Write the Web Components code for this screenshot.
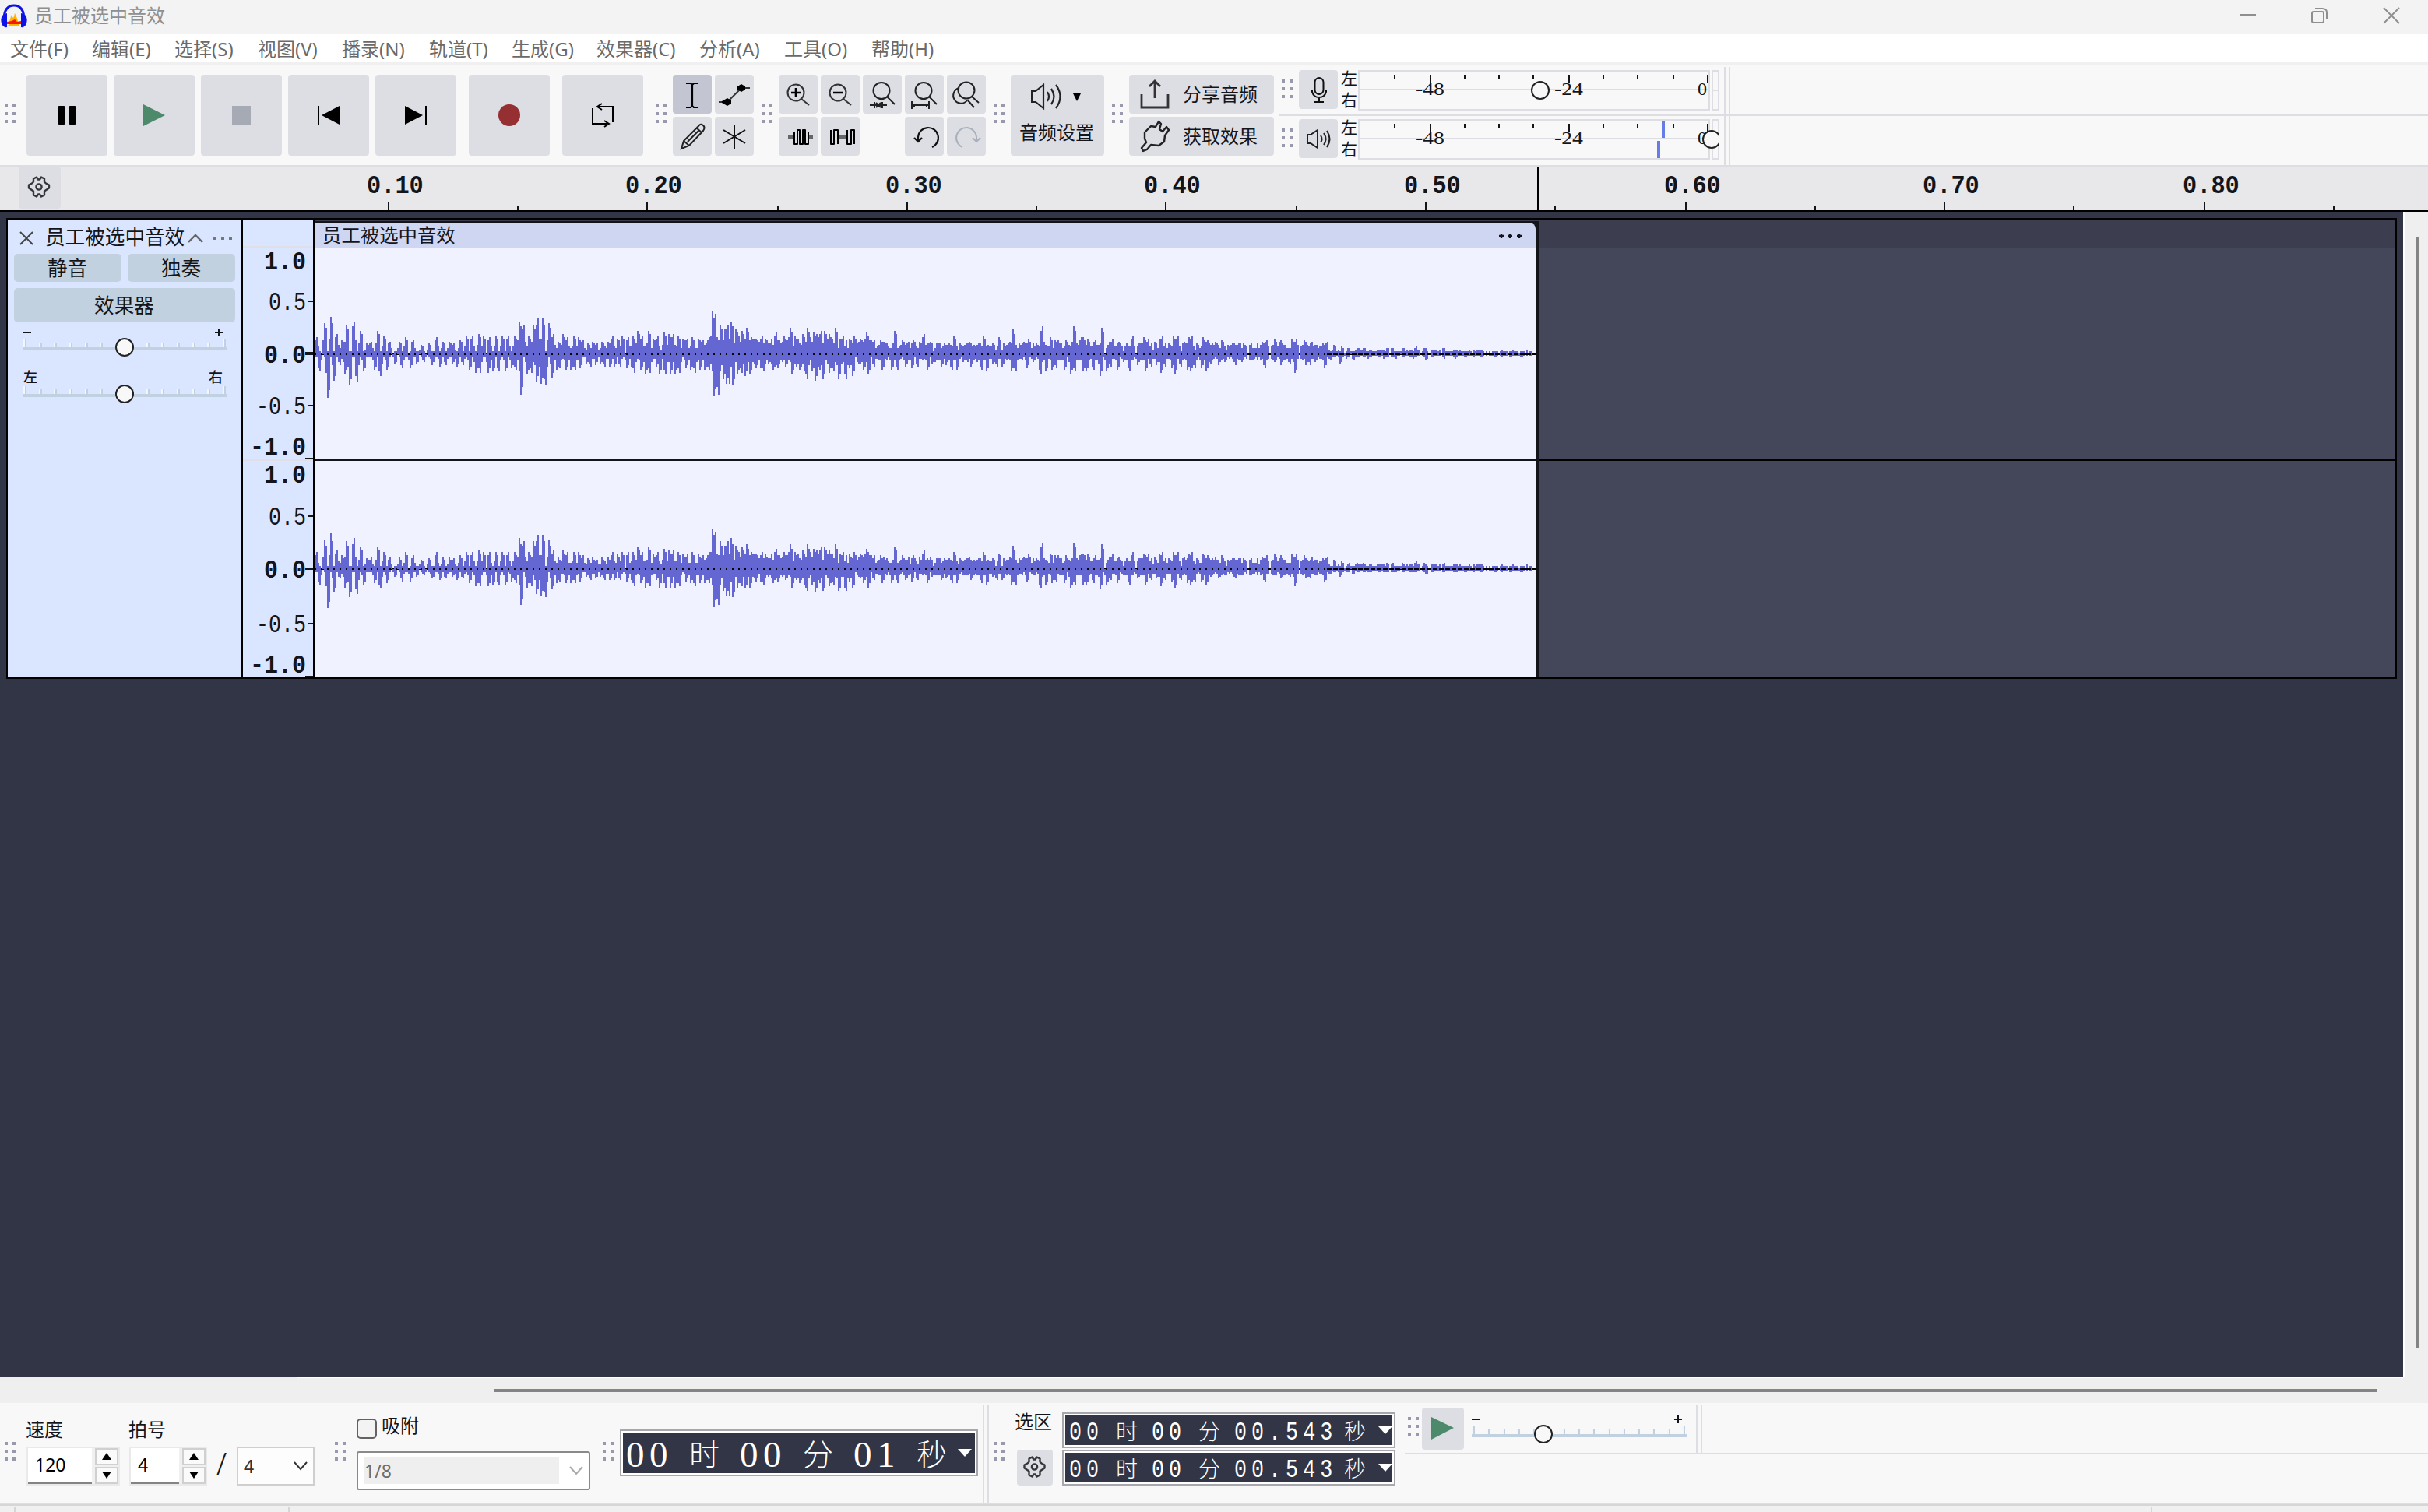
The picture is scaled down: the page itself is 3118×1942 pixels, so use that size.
<!DOCTYPE html>
<html lang="zh-CN">

<head>
    <meta charset="UTF-8">
    <meta name="viewport" content="width=device-width, initial-scale=1.0">
    <title>员工被选中音效</title>
    <style>
        html,
        body {
            margin: 0;
            width: 3118px;
            height: 1942px;
            overflow: hidden;
        }

        body {
            font-family: "Noto Sans", "Noto Sans CJK SC", sans-serif;
            font-size: 24px;
            color: #14151a;
            background: #f0f0f0;
        }
    </style>
</head>

<body>
    <audio-app></audio-app>

    <script>
        // 图标，坐标以按钮左上角为原点
        const icons = {
            pause: [104, 104, '<rect x="40" y="40" width="10" height="24" rx="2"/><rect x="54" y="40" width="10" height="24" rx="2"/>'],
            play: [104, 104, '<path d="M38 38 66 52 38 66z" fill="#4c8a6b"/>'],
            stop: [104, 104, '<rect x="40" y="40" width="24" height="24" fill="#a5aab5"/>'],
            prev: [104, 104, '<path d="M66 40V64L43 52z"/><path d="M39 40V64" stroke="#000" stroke-width="2"/>'],
            next: [104, 104, '<path d="M38 40V64L61 52z"/><path d="M65 40V64" stroke="#000" stroke-width="2"/>'],
            record: [104, 104, '<circle cx="52" cy="52" r="14" fill="#962f31"/>'],
            loop: [104, 104, '<g fill="none" stroke="#000" stroke-width="2"><path d="M39 43V63H57M65 61V41H46"/><path d="M51 37 45 41 51 45M54 59 60 63 54 67"/></g>'],
            gear: [54, 54, '<g transform="translate(-1 -.5)" fill="none" stroke="#35363b" stroke-width="2.4" stroke-linejoin="round"><path d="M24 14 26 17H28L30 14 34 16 34 20 36 22 40 24V28L37 30 34 32 34 37 30 39 28 36H26L24 39 20 37 20 32 17 30 14 28V24L18 22 20 20V16z"/><circle cx="27" cy="26.5" r="3.6"/></g>'],
            gearsmall: [46, 46, '<g transform="translate(-4.500 -4.500)" fill="none" stroke="#35363b" stroke-width="2.4" stroke-linejoin="round"><path d="M24 14 26 17H28L30 14 34 16 34 20 36 22 40 24V28L37 30 34 32 34 37 30 39 28 36H26L24 39 20 37 20 32 17 30 14 28V24L18 22 20 20V16z"/><circle cx="27" cy="26.5" r="3.6"/></g>'],
            ibeam: [50, 50, '<path d="M17 11H23L25 13 27 11H33M25 12V41M17 42H23L25 40 27 42H33" fill="none" stroke="#000" stroke-width="2.2"/>'],
            envelope: [50, 50, '<path d="M16 35 34 17M5 35H16M34 17H45" stroke="#333" stroke-width="2"/><path d="M34 12 39 15V19L34 22 29 19V15zM16 30 21 33V37L16 40 9 36V34z"/>'],
            pencil: [50, 50, '<path d="M11 41 14 31 33 12Q36 8 39 11 42 14 39 18L21 37zM14 31 21 37M30 14 37 20M19 32 34 17" fill="none" stroke="#222" stroke-width="2"/>'],
            multi: [50, 50, '<path d="M25 10V41M11 17 39 34M39 17 11 34" stroke="#111" stroke-width="2"/>'],
            zoomin: [50, 50, '<g fill="none" stroke="#333" stroke-width="2"><circle cx="22" cy="23" r="10.5"/><path d="M29 31 39 39"/><path d="M22 17V29M16 23H28" stroke-width="2.6" stroke="#000"/></g>'],
            zoomout: [50, 50, '<g fill="none" stroke="#333" stroke-width="2"><circle cx="22" cy="23" r="10.5"/><path d="M29 31 39 39"/><path d="M16 23H28" stroke-width="2.6" stroke="#000"/></g>'],
            zoomsel: [50, 50, '<g fill="none" stroke="#222" stroke-width="2"><circle cx="24" cy="20.5" r="10.5"/><path d="M31 28 41 38M9 39H31M15 35V43M25 35V43M17 36 20 39 17 42M23 36 20 39 23 42" /></g>'],
            zoomfit: [50, 50, '<g fill="none" stroke="#222" stroke-width="2"><circle cx="24" cy="20.5" r="10.5"/><path d="M31 28 41 38M9 34V44M31 34V44M9 39H31M12 37V41M28 37V41"/></g>'],
            zoomtoggle: [50, 50, '<g fill="none" stroke="#222" stroke-width="2"><circle cx="25" cy="20" r="10.5"/><path d="M16 17A10 10 0 1 0 26 33M32 28 41 36M27 33 35 42"/></g>'],
            trim: [50, 50, '<path d="M12 26H20M38 26H44" stroke="#666" stroke-width="4"/><path d="M20 19V35H24V17H27V35H31V17H34V35H38V19" fill="none" stroke="#000" stroke-width="2" stroke-linejoin="round"/>'],
            silence: [50, 50, '<path d="M22 26H34" stroke="#666" stroke-width="4"/><path d="M13 17V35H17V17H22V35M34 17V35H39V17H43V35" fill="none" stroke="#000" stroke-width="2" stroke-linejoin="round"/>'],
            undo: [50, 50, '<path d="M17 31V26A13 13 0 1 1 35 39M12 27 17 32 22 27" fill="none" stroke="#111" stroke-width="2.2"/>'],
            redo: [50, 50, '<path d="M38 31V26A13 13 0 1 0 20 39M33 27 38 32 43 27" fill="none" stroke="#aab0bb" stroke-width="2"/>'],
            mic: [50, 50, '<g fill="none" stroke="#111" stroke-width="2"><rect x="20.500" y="10" width="11" height="21" rx="5.500"/><path d="M17 25V28Q19 35 26 35 33 35 35 28V25M26 35V40M20 41H32"/></g>'],
            volume: [50, 50, '<g fill="none" stroke="#222" stroke-width="2"><path d="M11 20H15L24 14V37L15 31H11z"/><path d="M28 21Q31 25.500 28 30M32 18Q37 25.500 32 33M36 15Q43 25.500 36 36"/></g>'],
            speaker: [66, 36, '<g fill="none" stroke="#222" stroke-width="2.2"><path d="M1 11H6L16 3V33L6 25H1z"/><path d="M21 12Q25 18 21 24M26 8Q33 18 26 28M32 3Q43 18 32 33"/></g><path d="M54 14H64L59 24z"/>'],
            share: [38, 38, '<path d="M2 19V36H36V19M19 24V3M12 9 19 2 26 9" fill="none" stroke="#333" stroke-width="2.8"/>'],
            plug: [38, 42, '<path d="M6 16 14 8 20 9 24 2 27 5 25 12 29 15 34 9 37 13 32 20 31 28 24 33 14 32 9 38 4 40 2 36 8 29 6 24z" fill="none" stroke="#222" stroke-width="2.400" stroke-linejoin="round"/>'],
            playsmall: [54, 54, '<path d="M12 12 41 26 12 41z" fill="#4c8a6b"/>'],
            close: [18, 18, '<path d="M1 1 17 17M17 1 1 17" stroke="#444" stroke-width="2"/>'],
            up: [20, 12, '<path d="M1 11 10 2 19 11" fill="none" stroke="#666" stroke-width="2.400"/>'],
            dots: [26, 6, '<path d="M1 1h4v4h-4zM11 1h4v4h-4zM21 1h4v4h-4z" fill="#777"/>'],
            clipdots: [30, 8, '<path d="M1 4h6M4 1v6M12 4h6M15 1v6M24 4h6M27 1v6" stroke="#14151a" stroke-width="2.400"/>'],
            down: [18, 12, '<path d="M1 1 9 10 17 1" fill="none" stroke="currentColor" stroke-width="2"/>'],
            logo: [36, 44, '<g transform="translate(1 0)"><path d="M9 31C11 26 12 20 14 16Q16 24 18 14 21 19 24 31z" fill="#ffb400"/><path d="M8 25 14 24 18 22 21 25 26 24V28H8z" fill="#f31a00"/><path d="M4 23Q4 4 17 4T30 23" fill="none" stroke="#0d12e8" stroke-width="3"/><path d="M8 14Q-2 16 1 27 3 33 8 32zM26 14Q36 16 33 27 31 33 26 32z" fill="#0d12e8"/></g>'],
            min: [22, 22, '<path d="M1 10H21" stroke="#8f8f8f" stroke-width="2"/>'],
            restore: [22, 22, '<g fill="none" stroke="#8f8f8f" stroke-width="2"><rect x="1" y="6" width="15" height="14" rx="2"/><path d="M5 2H14Q20 2 20 7V16"/></g>'],
            quit: [22, 22, '<path d="M1 1 21 21M21 1 1 21" stroke="#8f8f8f" stroke-width="2"/>']
        }

        class Base extends HTMLElement {
            constructor() {
                super()
                this.attachShadow({ mode: 'open' })
            }
            connectedCallback() {
                this.shadowRoot.innerHTML = `<style>
                    * { box-sizing: border-box; }
                    :host { display: block; box-sizing: border-box; flex: none; }
                    ${this.css()}
                </style>${this.html()}`
            }
            css() { return '' }
            html() { return '<slot></slot>' }
            get(name, def) { return this.getAttribute(name) || def }
        }

        class AppIcon extends Base {
            css() { return 'svg { display: block; }' }
            html() {
                const [w, h, d] = icons[this.get('name')]
                return `<svg width="${w}" height="${h}" viewBox="0 0 ${w} ${h}">${d}</svg>`
            }
        }

        class IconButton extends Base {
            css() {
                return `
                    :host {
                        width: ${this.get('w', 50)}px;
                        height: ${this.get('h', 50)}px;
                        border-radius: 4px;
                        background: #dddee4;
                        overflow: hidden;
                    }
                    :host([active]) { background: #c3c5d3; }`
            }
            html() { return `<app-icon name="${this.get('icon')}"></app-icon>` }
        }

        // 工具栏左侧的拖动手柄
        class ToolGrip extends Base {
            css() {
                return `
                    :host {
                        display: grid;
                        grid-template-columns: 4px 4px;
                        grid-auto-rows: 4px;
                        gap: 6px;
                        width: 14px;
                    }
                    i { background: #9899ad; }`
            }
            html() { return '<i></i>'.repeat(6) }
        }

        class TitleBar extends Base {
            css() {
                return `
                    :host { display: flex; height: 44px; background: #f3f3f3; color: #8f8f8f; padding-right: 36px; }
                    .name { margin-left: 8px; line-height: 40px; flex: 1; }
                    .logo { padding-top: 3px; }
                    .win { display: flex; gap: 70px; padding-top: 9px; }
                `
            }
            html() {
                return `<div class="logo"><app-icon name="logo"></app-icon></div>
                    <div class="name"><slot></slot></div>
                    <div class="win"><app-icon name="min"></app-icon><app-icon name="restore"></app-icon><app-icon name="quit"></app-icon></div>`
            }
        }

        class MenuBar extends Base {
            css() {
                return `
                    :host { display: flex; height: 40px; background: #fff; border-bottom: 4px solid #f0f0f0; padding-left: 13px; color: #6a6a6a; }
                    span { line-height: 38px; white-space: nowrap; }`
            }
            html() {
                const items = [['文件(F)', 105], ['编辑(E)', 106], ['选择(S)', 107], ['视图(V)', 108], ['播录(N)', 112], ['轨道(T)', 106], ['生成(G)', 109], ['效果器(C)', 132], ['分析(A)', 109], ['工具(O)', 112], ['帮助(H)', 90]]
                return items.map(([t, w]) => `<span style="width:${w}px">${t}</span>`).join('')
            }
        }

        class LevelMeter extends Base {
            css() {
                return `
                    :host { display: flex; height: 52px; }
                    .lr { width: 26px; padding-left: 4px; font-size: 21px; line-height: 28px; margin-top: -4px; }
                    .lr div { height: 28px; }
                    svg { display: block; font: 24px "Liberation Serif", serif; }`
            }
            html() {
                const ticks = [47, 93, 137, 181, 225, 271, 315, 359, 405, 449]
                    .map((x, i) => `<rect x="${x - 1}" y="6" width="2" height="${[1, 5, 9].includes(i) ? 10 : 6}"/>`).join('')
                const play = this.get('icon') === 'volume'
                return `<icon-button icon="${this.get('icon')}"></icon-button>
                    <div class="lr"><div>左</div><div>右</div></div>
                    <svg width="464" height="52" fill="#14151a">
                        <g fill="none" stroke="#dddee3" stroke-width="2"><rect x="1" y="1" width="450" height="50"/><rect x="455" y="1" width="8" height="50"/><path d="M0 25H452M454 26H464"/></g>
                        ${ticks}
                        <text x="74" y="32" textLength="37" lengthAdjust="spacingAndGlyphs">-48</text><text x="252" y="32" textLength="37" lengthAdjust="spacingAndGlyphs">-24</text><text x="436" y="32">0</text>
                        ${play ? '<path d="M390 2h4v22h-4zM384 28h4v22h-4z" fill="#667ce6"/>' : ''}
                        <circle cx="${play ? 454 : 234}" cy="26" r="11" fill="#f8f8f8" stroke="#222" stroke-width="2"/>
                    </svg>`
            }
        }

        class WideButton extends Base {
            css() {
                return `
                    :host { display: flex; align-items: center; width: 186px; height: 50px; border-radius: 4px; background: #dddee4; padding-left: 14px; }
                    .t { margin-left: 17px; line-height: 46px; }
                    .i { width: 38px; }`
            }
            html() { return `<div class="i"><app-icon name="${this.get('icon')}"></app-icon></div><div class="t"><slot></slot></div>` }
        }

        class TopTools extends Base {
            css() {
                return `
                    :host { display: flex; height: 130px; background: #f8f8f8; border-bottom: 2px solid #dddee3; padding-left: 6px; }
                    .grip { padding-top: 50px; width: 28px; }
                    .row { display: flex; gap: 8px; padding-top: 12px; }
                    .rec { margin-left: 8px; }
                    .cells { display: grid; gap: 4px; padding-top: 12px; grid-auto-rows: 50px; margin-right: 10px; align-content: start; }
                    .setup { margin-top: 12px; width: 120px; height: 104px; border-radius: 4px; background: #dddee4; padding: 10px 0 0 11px; margin-right: 10px; }
                    .setup app-icon { margin-left: 15px; }
                    .setup div { line-height: 44px; margin-top: 6px; }
                    .share { display: flex; flex-direction: column; gap: 4px; padding-top: 12px; }
                    .meters { flex: 1; margin-left: 6px; display: flex; flex-direction: column; }
                    .meter { display: flex; padding-left: 4px; height: 64px; padding-top: 6px; }
                    .meter:first-child { height: 66px; border-bottom: 2px solid #dddee3; }
                    .meter:last-child { padding-top: 4px; }
                    .meter tool-grip { margin: 12px 8px 0 0; }
                    .end { width: 8px; margin: -4px 0 -10px 6px; border: solid #dddee3; border-width: 0 2px; }
                `
            }
            html() {
                const btn = (n, a = '') => `<icon-button icon="${n}" ${a}></icon-button>`
                const big = (n, c = '') => `<icon-button icon="${n}" w="104" h="104" class="${c}"></icon-button>`
                const grip = '<div class="grip"><tool-grip></tool-grip></div>'
                return `${grip}
                    <div class="row" style="margin-right:16px">${['pause', 'play', 'stop', 'prev', 'next'].map(n => big(n)).join('')}${big('record', 'rec')}${big('loop', 'rec')}</div>
                    <div class="grip" style="width:22px"><tool-grip></tool-grip></div>
                    <div class="cells" style="grid-template-columns:50px 50px">${btn('ibeam', 'active')}${btn('envelope')}${btn('pencil')}${btn('multi')}</div>
                    <div class="grip" style="width:22px"><tool-grip></tool-grip></div>
                    <div class="cells" style="grid-template-columns:repeat(5,50px)">${['zoomin', 'zoomout', 'zoomsel', 'zoomfit', 'zoomtoggle', 'trim', 'silence'].map(n => btn(n)).join('')}<span></span>${btn('undo')}${btn('redo')}</div>
                    <div class="grip" style="width:22px"><tool-grip></tool-grip></div>
                    <div class="setup"><app-icon name="speaker"></app-icon><div>音频设置</div></div>
                    <div class="grip" style="width:22px"><tool-grip></tool-grip></div>
                    <div class="share"><wide-button icon="share">分享音频</wide-button><wide-button icon="plug">获取效果</wide-button></div>
                    <div class="meters">
                        <div class="meter"><tool-grip></tool-grip><level-meter icon="mic"></level-meter><div class="end"></div></div>
                        <div class="meter"><tool-grip></tool-grip><level-meter icon="volume"></level-meter><div class="end"></div></div>
                    </div>`
            }
        }

        class TimeRuler extends Base {
            css() {
                return `
                    :host { display: flex; height: 58px; background: #e8e8ea; border-bottom: 2px solid #000; padding-left: 24px; }
                    svg { display: block; font: bold 33px "Liberation Mono", monospace; }`
            }
            html() {
                let s = ''
                for (let i = 0; i < 16; i++) {
                    const x = Math.floor((498.5 + i * 166.55) / 2) * 2 - 78
                    s += `<rect x="${x}" y="${i % 2 ? 50 : 46}" width="2" height="10"/>`
                    if (i % 2 === 0) s += `<text transform="translate(${x - 27} 34) scale(.92 1)">${((i / 2 + 1) / 10).toFixed(2)}</text>`
                }
                return `<icon-button icon="gear" w="54" h="54"></icon-button>
                    <svg width="3040" height="56" fill="#14151a">${s}<rect x="1896" width="2" height="56" fill="#000"/></svg>`
            }
        }

        // 音量 / 声像滑块
        class MiniSlider extends Base {
            css() {
                return `
                    .cap { display: flex; justify-content: space-between; width: 256px; height: 18px; font-size: 18px; line-height: 18px; font-weight: 500; }
                    svg { display: block; overflow: visible; }`
            }
            html() {
                const w = +this.get('width', 262), n = +this.get('ticks', 14), pos = +this.get('pos', 130)
                const step = (w - 6) / (n - 1)
                let t = ''
                for (let i = 0; i < n; i++) {
                    const x = Math.round(i * step), h = i % (n - 1) ? 6 : 10
                    t += `<rect x="${x}" y="${14 - h}" width="2" height="${h}" fill="#f4f7fa"/><rect x="${x + 2}" y="${14 - h}" width="2" height="${h}" fill="#c2d1e0"/>`
                }
                const cap = this.hasAttribute('left')
                    ? `<div class="cap"><span>${this.get('left')}</span><span>${this.get('right')}</span></div>`
                    : `<svg width="${w}" height="18"><path d="M0 13H10M${w - 16} 13H${w - 6}M${w - 11} 8V18" stroke="#14151a" stroke-width="2"/></svg>`
                return `${cap}<svg width="${w}" height="26">${t}<rect y="14" width="${w}" height="4" fill="#c2d1e0"/>
                    <circle cx="${pos}" cy="14" r="11" fill="#f8f8f8" stroke="#222" stroke-width="2"/></svg>`
            }
        }

        class TrackPanel extends Base {
            css() {
                return `
                    :host { width: 302px; background: #dae6ff; border-right: 2px solid #000; padding: 0 8px; font-family: "Noto Sans CJK SC", sans-serif; font-size: 25.600px; }
                    .head { display: flex; align-items: center; height: 44px; padding-left: 7px; }
                    .head app-icon { margin-top: 3px; }
                    .name { width: 183px; margin: -3px 0 0 15px; white-space: nowrap; }
                    .head app-icon:last-child { margin-left: 12px; }
                    .btns { display: grid; grid-template-columns: 138px 138px; gap: 8px; }
                    .btns div { background: #c2d1e0; border-radius: 5px; height: 36px; line-height: 34px; text-align: center; padding-right: 1px; }
                    .btns .fx { grid-column: span 2; height: 44px; line-height: 41px; }
                    mini-slider { margin: 0 0 0 12px; }
                    mini-slider + mini-slider { margin-top: 16px; }`
            }
            html() {
                return `<div class="head"><app-icon name="close"></app-icon><div class="name"><slot></slot></div><app-icon name="up"></app-icon><app-icon name="dots"></app-icon></div>
                    <div class="btns"><div>静音</div><div>独奏</div><div class="fx">效果器</div></div>
                    <mini-slider></mini-slider><mini-slider left="左" right="右"></mini-slider>`
            }
        }

        class AmpScale extends Base {
            css() {
                return `
                    :host { width: 92px; background: #dae6ff; border-right: 2px solid #000; }
                    svg { display: block; overflow: visible; font: 33px "Liberation Mono", monospace; }
                    .b { font-weight: bold; }`
            }
            html() {
                // [文字, 基线, 刻度]
                const rows = [['1.0', 64, 0], ['0.5', 116, 104], ['0.0', 184, 170], ['-0.5', 250, 238], ['-1.0', 302, 306],
                ['1.0', 338, 0], ['0.5', 392, 380], ['0.0', 460, 448], ['-0.5', 530, 518], ['-1.0', 582, 586]]
                const s = rows.map(([t, y, k]) => {
                    const bold = !t.includes('5')
                    const w = t.length * (bold ? 18 : 16)
                    return `<text transform="translate(${81 - w} ${y}) scale(${bold ? 0.91 : 0.81} 1)" class="${bold ? 'b' : ''}">${t}</text>`
                        + (k ? `<rect x="${bold ? 80 : 84}" y="${k}" width="${bold ? 10 : 6}" height="${k === 170 ? 4 : 2}"/>` : '')
                }).join('')
                return `<svg width="90" height="588" fill="#14151a"><path d="M0 35H90M0 309H90" stroke="#e0dfe8" stroke-width="2"/>${s}</svg>`
            }
        }

        // 波形峰值：x:y，每段有自己的起点与横向比例
        const segments = [{
            start: -4, rate: 1.96, mid: 225,
            up: '11:156 30:102 47:78 61:144 74:168 88:108 104:96 122:132 139:180 147:174 163:132 180:150 197:174 218:174 236:156 255:168 273:186 293:180 312:156 328:174 344:174 358:180 373:168 387:150 403:150 418:144 433:150 448:156 463:150 478:150 493:150 508:150 521:96 532:108 544:150 557:108 570:84 582:84 594:102 607:144 618:174 631:144 644:156 657:150 669:156 681:168 694:180 707:174 719:184 731:174 745:174 758:150 770:162 782:150 794:156 806:150 820:132 832:150 845:132 858:162 870:150 884:138 896:144 908:144 921:150 934:162 946:162 958:156 971:162 984:168 998:156 1009:54 1017:66 1028:108 1037:126 1046:108 1056:96 1066:126 1074:150 1083:132 1092:120 1104:156 1111:162 1122:168 1131:150 1141:162 1153:180 1167:138 1178:180 1186:150 1198:156 1205:120 1216:150 1224:162 1233:144 1245:120 1254:156 1263:138 1272:144 1280:132 1291:132 1300:144 1311:162 1319:120 1330:168 1338:150 1352:162 1366:150 1377:174 1394:138 1409:168 1420:198 1430:168 1440:174 1452:192 1467:132 1485:168 1502:174 1515:168 1528:174 1542:144 1555:174',
            down: '21:288 38:390 54:324 69:264 81:300 96:342 115:330 130:288 155:282 171:306 188:282 208:258 227:276 246:276 264:258 284:252 303:264 320:270 336:264 351:258 366:270 380:264 395:282 410:294 425:294 441:294 456:288 470:288 486:288 501:276 514:282 527:378 540:300 551:294 563:330 576:336 589:342 602:312 615:282 625:276 638:282 650:282 663:282 675:276 688:258 700:270 714:264 724:258 735:270 750:270 762:270 777:270 790:276 802:270 813:294 827:282 840:300 852:294 865:270 876:300 889:300 902:300 914:300 927:294 940:276 953:282 966:294 978:282 989:282 1001:282 1012:384 1019:330 1025:378 1034:318 1041:336 1052:336 1060:342 1072:300 1080:294 1088:306 1100:300 1107:276 1117:276 1127:276 1135:288 1148:258 1161:282 1174:276 1193:270 1209:300 1219:270 1228:282 1238:288 1248:318 1258:288 1268:324 1276:282 1287:318 1303:294 1312:288 1323:318 1332:258 1343:318 1354:276 1362:306 1375:258 1388:282 1399:300 1415:270 1436:282 1460:282 1473:282 1492:270 1510:276 1523:270 1547:282 1560:258'
        }, {
            start: 776, rate: 1.912, mid: 554,
            up: '25:504 45:518 60:510 72:516 86:480 98:510 110:516 122:504 133:516 147:510 158:480 170:516 183:516 195:486 207:516 220:504 231:456 245:510 257:504 268:492 285:510 303:444 322:486 331:498 342:498 359:498 377:444 396:486 403:486 414:492 432:498 448:450 465:504 476:492 488:504 506:522 522:480 540:510 549:486 562:492 577:504 587:492 597:480 613:510 622:480 633:480 650:504 660:486 670:480 682:510 697:486 708:498 716:516 725:504 735:516 743:498 757:516 768:510 780:516 797:510 815:510 830:528 843:504 854:498 870:492 880:522 889:498 903:528 915:492 927:492 944:498 954:516 963:504 976:522 990:510 1000:504 1017:516 1036:522 1054:528 1073:528 1090:528 1110:534 1128:534 1146:528 1163:528 1184:528 1205:534 1218:522 1238:528 1260:534 1290:528 1310:534 1340:540 1380:534 1410:540 1450:540 1480:540',
            down: '40:582 52:600 65:594 79:612 92:612 106:582 117:582 128:600 140:582 153:612 165:618 180:588 190:600 201:600 225:618 237:618 263:606 280:582 298:630 311:618 326:612 337:606 355:612 372:630 383:618 400:618 409:618 427:612 445:636 457:618 472:600 484:612 500:582 518:618 537:594 555:618 568:600 580:594 591:624 603:600 620:606 628:630 641:600 656:612 667:618 675:606 692:606 702:618 715:588 733:594 750:582 775:594 790:582 820:576 848:606 870:582 886:594 911:588 922:624 948:594 958:594 970:582 995:606 1010:576 1032:588 1047:570 1067:576 1103:570 1140:570 1172:570 1213:570 1241:576 1287:570 1314:570 1360:564 1430:564'
        }]

        class WaveChannel extends Base {
            css() { return 'svg { display: block; }' }
            html() {
                const h = +this.get('h'), mid = +this.get('mid'), gain = +this.get('gain', 1)
                let d = ''
                const bar = (x, y0, y1) => {
                    const a = Math.round(Math.min(y0, y1) / 2) * 2, b = Math.round(Math.max(y0, y1) / 2) * 2
                    d += `M${x} ${mid + a}h2V${mid + b}h-2z`
                }
                segments.forEach(s => {
                    ['up', 'down'].forEach(dir => {
                        s[dir].split(' ').forEach((p, i) => {
                            const [px, py] = p.split(':').map(Number)
                            const x = Math.round((s.start + px / s.rate) / 2) * 2
                            const v = (py - s.mid) / 3 * gain
                            const inner = dir === 'up' ? 4 : -4
                            bar(x, v, inner)
                            bar(i % 3 ? x + 2 : x - 2, v * 0.82, inner)
                            bar(i % 3 ? x - 2 : x + 2, v * 0.42, 0)
                        })
                    })
                })
                // 密集部分的中心填充
                for (let x = 262; x < 1566; x += 2) {
                    const r = Math.abs(Math.sin(x * 12.9898) * 43758.5453) % 1
                    const t = x < 500 ? 7 : x < 720 ? 14 : x < 1300 ? 10 : 4
                    if (r > 0.2) bar(x, -t * (0.5 + r), x < 1300 ? t * (0.3 + r * 0.6) : 1)
                }
                return `<svg width="1568" height="${h}" shape-rendering="crispEdges"><rect width="1568" height="${h}" fill="#f0f2ff"/>
                    <path d="M0 ${mid}H1568" stroke="#000" stroke-width="2"/><path d="${d}" fill="#6466d2"/>
                    <path d="M0 ${mid}H1568" stroke="#000" stroke-width="2" stroke-dasharray="2 6"/>
                    <path d="M1300 ${mid}H1568" stroke="#000" stroke-width="2" stroke-dasharray="4 4"/></svg>`
            }
        }

        class AudioClip extends Base {
            css() {
                return `
                    :host { width: 1572px; background: #14151a; border-top: 2px solid #3d3d50; padding-top: 2px; border-right: 0; }
                    .head { display: flex; align-items: center; justify-content: space-between; width: 1568px; height: 32px; background: #ced6f2; padding: 0 18px 0 10px;
                        border-top-right-radius: 8px; font: 24.400px/30px "Noto Sans CJK SC", sans-serif; }
                    .head span { margin-top: -3px; }
                    .head app-icon { margin-top: 2px; }
                    wave-channel + wave-channel { margin-top: 2px; }`
            }
            html() {
                return `<div class="head"><span><slot></slot></span><app-icon name="clipdots"></app-icon></div>
                    <wave-channel h="272" mid="137"></wave-channel><wave-channel h="278" mid="139" gain="0.92"></wave-channel>`
            }
        }

        class TrackArea extends Base {
            css() {
                return `
                    :host { display: flex; height: 1496px; background: #313545; }
                    .view { width: 3086px; padding: 8px; }
                    .track { display: flex; width: 3070px; height: 592px; border: 2px solid #000; }
                    .rest { flex: 1; display: flex; flex-direction: column; }
                    .rest i { height: 36px; background: #3d3d50; }
                    .rest b { height: 272px; background: #44465a; border-bottom: 0; }
                    .rest b + b { flex: 1; border-top: 2px solid #000; }
                    .bar { flex: 1; background: #efefef; border-left: 2px solid #fff; padding: 32px 0 0 14px; }
                    .bar div { width: 4px; height: 1428px; background: #848484; }`
            }
            html() {
                return `<div class="view"><div class="track">
                        <track-panel>员工被选中音效</track-panel><amp-scale></amp-scale><audio-clip>员工被选中音效</audio-clip>
                        <div class="rest"><i></i><b></b><b></b></div>
                    </div></div>
                    <div class="bar"><div></div></div>`
            }
        }

        class HScroll extends Base {
            css() {
                return `
                    :host { height: 34px; background: #efefef; }
                    .line { margin-left: 382px; width: 2704px; height: 2px; background: #fff; }
                    .thumb { margin: 14px 0 0 634px; width: 2418px; height: 4px; background: #848484; }`
            }
            html() { return '<div class="line"></div><div class="thumb"></div>' }
        }

        class SpinBox extends Base {
            css() {
                return `
                    :host { display: flex; height: 50px; border: 2px solid #eaeaea; width: ${this.get('w')}px; font-size: 23px; }
                    .v { flex: 1; background: #fff; border-bottom: 2px solid #848484; padding-left: 9px; line-height: 42px; color: #000; }
                    .s { width: 34px; display: flex; flex-direction: column; gap: 2px; padding-left: 4px; background: #f0f0f0; }
                    .s i { flex: 1; border: 2px solid #d0d0d0; background: #fafafa; display: flex; align-items: center; justify-content: center; }
                    svg { display: block; }`
            }
            html() {
                return `<div class="v"><slot></slot></div><div class="s">
                    <i><svg width="12" height="10"><path d="M6 0 12 9H0z"/></svg></i><i><svg width="12" height="10"><path d="M6 9 12 0H0z"/></svg></i></div>`
            }
        }

        class TimeField extends Base {
            css() {
                const big = this.hasAttribute('big')
                return `
                    :host { width: ${big ? 460 : 428}px; height: ${big ? 60 : 46}px; border: 2px solid #a7a8ae; padding: 2px; background: #fff; }
                    .in { display: flex; align-items: center; height: 100%; background: #313545; color: #fff; padding-left: ${big ? 4 : 5}px; line-height: 1; }
                    .n { width: ${big ? 60 : 44}px; white-space: nowrap; }
                    .n.long { width: 120px; }
                    .n span { display: inline-block; transform-origin: 0 50%; font: ${big ? '47px/1 "Liberation Serif", serif' : '33px/1 "Liberation Mono", monospace'};
                        letter-spacing: ${big ? 6.5 : 7.4}px; transform: scaleX(${big ? 1 : 0.81}); margin-top: ${big ? 4 : 7}px; }
                    .u { width: ${big ? 86 : 62}px; text-align: center; font: ${big ? '300 39px' : '300 28px'}/1 "Noto Sans CJK SC", sans-serif; margin-top: -1px; padding-right: ${big ? 5 : 2}px; }
                    .u.last { width: ${big ? 78 : 64}px; padding: 0 0 0 ${big ? 3 : 6}px; }
                    svg { display: block; margin-left: ${big ? -4 : 1}px; }`
            }
            html() {
                const parts = this.get('value').split(' ')
                return `<div class="in">${parts.map((p, i) => i % 2 ? `<div class="u ${i === 5 ? 'last' : ''}">${p}</div>` : `<div class="n ${p.length > 2 ? 'long' : ''}"><span>${p}</span></div>`).join('')}
                    <svg width="18" height="10"><path d="M0 0H18L9 10z" fill="#fff"/></svg></div>`
            }
        }

        class BottomTools extends Base {
            css() {
                return `
                    :host { display: flex; height: 132px; background: #f8f8f8; border-bottom: 2px solid #d6d6d8; box-shadow: inset 0 -2px #dddee3; padding-left: 6px; }
                    .grip { padding-top: 50px; width: 28px; }
                    .col { padding-top: 18px; }
                    .lab { height: 38px; line-height: 30px; font-family: "Noto Sans CJK SC", sans-serif; white-space: nowrap; margin-left: -1px; }
                    .slash { font-size: 38px; line-height: 42px; font-weight: 300; }
                    .row { display: flex; }
                    .sel { display: flex; align-items: center; justify-content: space-between; width: 100px; height: 50px; border: 2px solid #cfcfcf; padding: 0 7px; font-size: 23px; color: #333; background: #fdfdfd; line-height: 44px; }
                    .snap { padding-top: 14px; width: 316px; }
                    .check { display: flex; height: 40px; }
                    .check .lab { margin-top: -1px; }
                    .box { width: 26px; height: 26px; border: 2px solid #626262; border-radius: 5px; background: #f3f3f3; margin: 6px 7px 0 0; }
                    .combo { display: flex; align-items: center; width: 300px; height: 50px; border: 2px solid #8a8a8a; border-radius: 3px; background: #fff; padding-left: 8px; margin-top: 8px; color: #aaa; font-size: 23px; }
                    .combo div { width: 250px; height: 34px; line-height: 34px; background: #efefef; color: #6d6d6d; margin-right: 13px; }
                    .dbl { width: 8px; margin: 2px 6px 2px 6px; border: solid #dddee3; border-width: 0 2px; }
                    .fields { display: flex; flex-direction: column; gap: 2px; padding-top: 12px; }
                    .right { flex: 1; }
                    .speed { display: flex; height: 66px; border-bottom: 2px solid #dddee3; margin-left: 12px; padding-left: 4px; }
                    .speed .grip { padding-top: 18px; width: 18px; }
                    .speed icon-button { margin-top: 6px; }
                `
            }
            html() {
                const grip = '<div class="grip"><tool-grip></tool-grip></div>'
                return `${grip}
                    <div class="col" style="width:132px"><div class="lab">速度</div><spin-box w="120">120</spin-box></div>
                    <div class="col" style="width:112px"><div class="lab">拍号</div><spin-box w="100">4</spin-box></div>
                    <div class="col" style="width:26px"><div class="lab"></div><div class="slash">/</div></div>
                    <div class="col" style="width:126px"><div class="lab"></div><div class="sel">4<app-icon name="down"></app-icon></div></div>
                    ${grip}
                    <div class="snap"><div class="check"><div class="box"></div><div class="lab">吸附</div></div>
                        <div class="combo"><div>1/8</div><app-icon name="down"></app-icon></div></div>
                    <div class="grip" style="width:22px"><tool-grip></tool-grip></div>
                    <time-field big value="00 时 00 分 01 秒" style="margin-top:34px"></time-field>
                    <div class="dbl"></div>
                    <div class="grip"><tool-grip></tool-grip></div>
                    <div style="width:60px;padding-top:8px;flex:none"><div class="lab" style="height:52px">选区</div><icon-button icon="gearsmall" w="46" h="46" style="margin-left:2px"></icon-button></div>
                    <div class="fields"><time-field value="00 时 00 分 00.543 秒"></time-field><time-field value="00 时 00 分 00.543 秒"></time-field></div>
                    <div class="right"><div class="speed"><div class="grip"><tool-grip></tool-grip></div>
                        <icon-button icon="playsmall" w="54" h="54"></icon-button>
                        <mini-slider width="276" ticks="15" pos="92" style="margin:8px 12px 0 10px"></mini-slider>
                        <div class="dbl" style="margin:2px 0 0"></div></div></div>`
            }
        }

        class StatusBar extends Base {
            css() {
                return `
                    :host { display: flex; height: 8px; background: #f0f0f0; padding-top: 2px; }
                    i { border-right: 2px solid #d6d6d8; }`
            }
            html() { return '<i style="width:20px"></i><i style="width:352px"></i><i style="width:2392px"></i>' }
        }

        class AudioApp extends Base {
            css() { return ':host { display: flex; flex-direction: column; width: 3118px; height: 1942px; }' }
            html() {
                return `<title-bar>员工被选中音效</title-bar><menu-bar></menu-bar><top-tools></top-tools><time-ruler></time-ruler>
                    <track-area></track-area><h-scroll></h-scroll><bottom-tools></bottom-tools><status-bar></status-bar>`
            }
        }

        const tags = {
            'app-icon': AppIcon, 'icon-button': IconButton, 'tool-grip': ToolGrip, 'title-bar': TitleBar, 'menu-bar': MenuBar,
            'level-meter': LevelMeter, 'wide-button': WideButton, 'top-tools': TopTools, 'time-ruler': TimeRuler, 'mini-slider': MiniSlider,
            'track-panel': TrackPanel, 'amp-scale': AmpScale, 'wave-channel': WaveChannel, 'audio-clip': AudioClip, 'track-area': TrackArea,
            'h-scroll': HScroll, 'spin-box': SpinBox, 'time-field': TimeField, 'bottom-tools': BottomTools, 'status-bar': StatusBar, 'audio-app': AudioApp
        }
        Object.keys(tags).forEach(k => window.customElements.define(k, tags[k]))
    </script>
</body>

</html>
